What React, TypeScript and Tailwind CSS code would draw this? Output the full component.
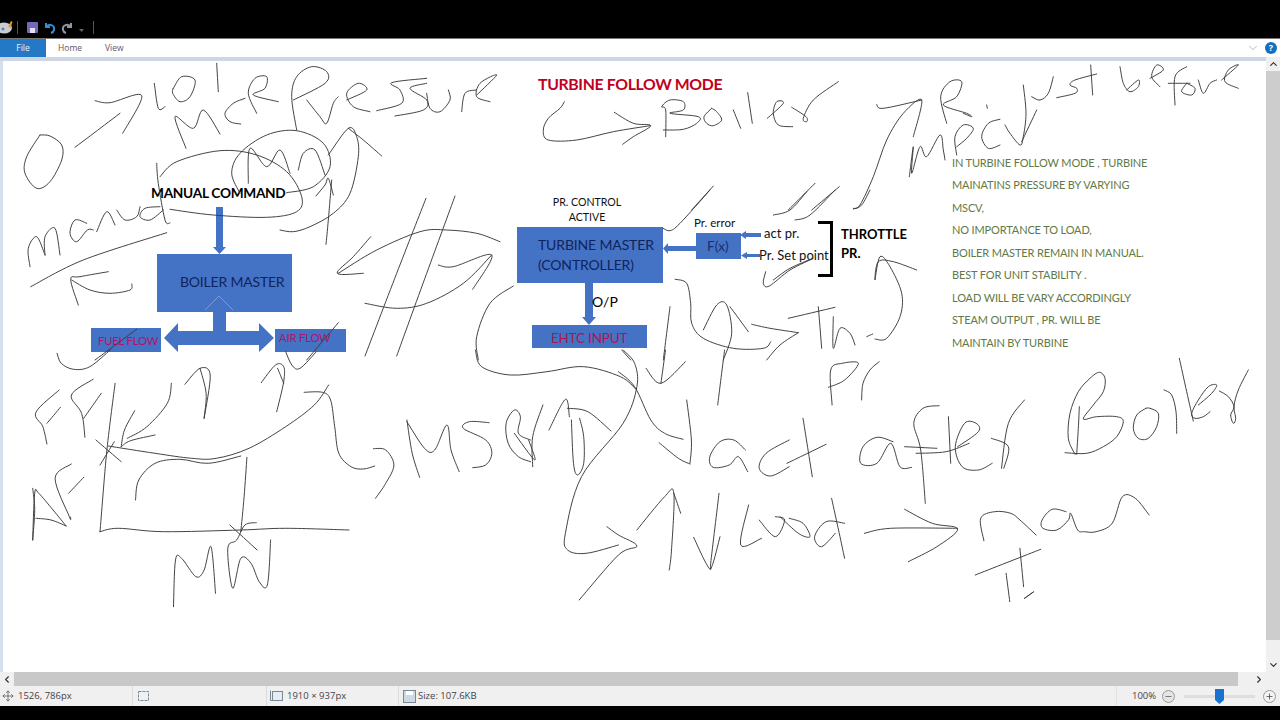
import { Minus, Plus, Move, ChevronDown, ChevronUp, ChevronLeft, ChevronRight } from 'lucide-react';

// Pen strokes traced from the picture, flat x,y lists, in crop coordinates (origin + x/y scale)
const inkGroups: { ox: number; oy: number; sx: number; sy: number; strokes: number[][] }[] = [
  {
    ox: 0,
    oy: 60,
    sx: 3,
    sy: 3,
    strokes: [
      [120, 225, 80, 290, 75, 340, 110, 385, 150, 365, 185, 300, 185, 255, 150, 228, 120, 225],
      [225, 262, 360, 160],
      [285, 122, 330, 128, 425, 107, 368, 220],
      [463, 70, 475, 145, 495, 140],
      [520, 85, 545, 50, 585, 60, 570, 110, 540, 125, 518, 100, 520, 85],
      [650, 10, 655, 95],
      [558, 265, 525, 170, 580, 205, 610, 150, 660, 222],
      [722, 192, 690, 185, 675, 160, 700, 130, 735, 115],
      [770, 160, 745, 100, 765, 55, 800, 50, 795, 85, 760, 105, 835, 125],
      [890, 210, 875, 110, 890, 50, 935, 20, 980, 35, 975, 70, 880, 120],
      [920, 120, 960, 170, 980, 190, 1000, 130, 1015, 110],
      [1040, 120, 1100, 90, 1075, 70, 1040, 100, 1060, 140, 1110, 155],
      [1280, 55, 1175, 68, 1200, 90, 1205, 130, 1130, 152],
      [1280, 70, 1230, 85, 1280, 120, 1270, 150, 1185, 168],
      [1280, 100, 1290, 145, 1320, 155, 1350, 120, 1345, 90],
      [1385, 155, 1395, 100, 1430, 90],
      [1430, 105, 1490, 45, 1440, 70, 1430, 110, 1470, 125],
      [480, 350, 530, 305, 660, 272, 770, 285, 860, 335, 905, 410, 890, 455, 800, 472, 640, 465, 510, 448],
      [860, 398, 940, 380, 990, 320, 970, 250, 890, 212, 800, 225, 720, 280, 695, 340, 720, 400],
      [745, 370, 750, 265, 800, 320, 840, 270, 870, 340],
      [895, 330, 910, 280, 945, 270, 975, 345],
      [985, 285, 1045, 205, 1070, 230, 1075, 290, 1050, 400, 1000, 460, 930, 500, 880, 515, 840, 510],
      [1045, 205, 1090, 240, 1145, 288],
      [948, 408, 975, 375, 985, 355, 1000, 405],
      [995, 360, 985, 480, 978, 553],
      [90, 620, 85, 565, 110, 530, 135, 585],
      [135, 585, 135, 530, 165, 505, 180, 585],
      [260, 490, 225, 480, 210, 520, 230, 545, 262, 510, 280, 510],
      [290, 515, 320, 455, 345, 495],
      [350, 450, 375, 480, 410, 470, 420, 440],
      [480, 440, 435, 445, 420, 470, 450, 480, 490, 450],
      [470, 310, 475, 370, 495, 480, 510, 488],
      [92, 680, 250, 600, 500, 518],
      [235, 735, 212, 658, 240, 650, 325, 635],
      [215, 660, 270, 690, 330, 700, 390, 690, 395, 672],
      [1112, 530, 1060, 590, 1012, 640, 1090, 640],
      [1015, 640, 1130, 570, 1260, 515, 1340, 510, 1430, 520, 1500, 545],
      [1278, 415, 1190, 640, 1095, 888],
      [1365, 408, 1280, 640, 1190, 888],
      [1095, 730, 1190, 745, 1280, 730, 1390, 670, 1475, 585],
      [1315, 615, 1360, 620, 1475, 585, 1418, 688],
      [1540, 678, 1470, 730, 1430, 830, 1435, 900],
      [285, 900, 410, 808],
      [920, 900, 1015, 788],
    ],
  },
  {
    ox: 0,
    oy: 350,
    sx: 2.45,
    sy: 3,
    strokes: [
      [1165, 0, 1180, 50, 1250, 75, 1340, 65, 1430, 50, 1520, 80, 1560, 120],
      [140, 10, 150, 40, 180, 58, 220, 50, 270, 0],
      [700, 5, 715, 45, 735, 55, 775, 5],
      [145, 120, 88, 187, 105, 230, 115, 282],
      [115, 220, 148, 172],
      [228, 88, 175, 135, 200, 190, 208, 262],
      [205, 205, 248, 130],
      [282, 100, 262, 300, 245, 545],
      [420, 100, 410, 160, 360, 230, 312, 265],
      [330, 182, 305, 240, 297, 290],
      [380, 255, 320, 272, 297, 290],
      [235, 270, 297, 335],
      [280, 275, 245, 345],
      [265, 288, 380, 310, 470, 325, 530, 325, 610, 295, 700, 230, 770, 165, 805, 105],
      [745, 127, 790, 127, 810, 150, 820, 230, 830, 310, 860, 350, 890, 357, 918, 348],
      [332, 450, 340, 390, 380, 340, 440, 328, 510, 340, 590, 318],
      [605, 322, 598, 440, 590, 545],
      [245, 545, 290, 535, 400, 545, 590, 540, 700, 535, 855, 540],
      [563, 525, 630, 600],
      [628, 518, 600, 525, 580, 570, 558, 595, 570, 715, 590, 625, 615, 640, 635, 695, 655, 705, 663, 570],
      [425, 770, 430, 630, 445, 625, 480, 680, 500, 660, 517, 590, 528, 730],
      [80, 570, 85, 430, 95, 430, 130, 480, 162, 528],
      [88, 505, 125, 510, 162, 528],
      [80, 415, 85, 480, 80, 570],
      [175, 342, 135, 385, 170, 500, 172, 500],
      [168, 430, 205, 382],
      [453, 103, 490, 55, 515, 75, 500, 205],
      [490, 55, 505, 130, 500, 205],
      [640, 98, 675, 45, 695, 50, 695, 95, 678, 185],
      [680, 55, 695, 100],
      [997, 210, 1010, 310, 1028, 382],
      [997, 215, 1040, 295, 1065, 300, 1095, 225, 1105, 300, 1125, 365],
      [1198, 218, 1150, 215, 1135, 235, 1190, 270, 1205, 310, 1190, 345, 1158, 353],
      [915, 296, 945, 300, 965, 345, 945, 400, 920, 445],
      [1300, 335, 1270, 320, 1245, 280, 1240, 220, 1260, 180, 1275, 200, 1270, 250, 1300, 270],
      [1330, 165, 1305, 260, 1305, 350],
      [1260, 250, 1310, 330, 1295, 270],
      [1345, 240, 1385, 148, 1395, 200],
      [1390, 175, 1440, 185, 1497, 243],
      [1400, 210, 1405, 340, 1415, 375, 1430, 340, 1430, 260, 1420, 205],
    ],
  },
  {
    ox: 540,
    oy: 350,
    sx: 2.167,
    sy: 3,
    strokes: [
      [170, 65, 205, 110, 240, 210, 270, 250, 310, 268],
      [180, 0, 205, 40, 210, 110, 180, 220, 90, 380, 55, 550, 60, 600, 100, 610, 170, 585],
      [145, 530, 170, 555, 210, 588, 170, 615, 85, 750],
      [318, 150, 328, 270, 325, 340],
      [258, 278, 300, 325, 325, 342],
      [230, 55, 262, 100, 315, 35],
      [272, 0, 262, 100],
      [400, 0, 385, 165],
      [633, 165, 630, 60, 655, 40, 690, 40, 660, 90, 625, 112],
      [697, 150, 700, 100, 715, 60, 735, 35],
      [445, 300, 420, 270, 390, 275, 368, 320, 375, 352, 410, 345, 430, 320, 450, 365],
      [540, 270, 490, 310, 475, 355, 500, 378, 540, 350],
      [570, 205, 590, 380],
      [535, 340, 620, 283],
      [765, 275, 730, 262, 700, 290, 695, 340, 730, 340, 760, 280, 780, 350, 805, 352],
      [865, 167, 830, 175, 810, 220, 825, 300, 835, 460],
      [790, 290, 860, 295],
      [815, 310, 880, 305, 930, 280],
      [885, 200, 890, 340],
      [905, 290, 950, 245, 945, 220, 920, 220, 900, 290, 915, 350, 950, 360, 980, 340],
      [978, 265, 1015, 290, 1005, 355],
      [1050, 150, 1015, 220, 1000, 355],
      [210, 540, 270, 440, 290, 430, 285, 600, 280, 660],
      [290, 430, 305, 490],
      [388, 430, 370, 640, 372, 650],
      [333, 562, 360, 640, 372, 650, 390, 560],
      [452, 465, 435, 585, 480, 565],
      [475, 510, 510, 560, 530, 510, 510, 500],
      [520, 500, 560, 550, 585, 560, 570, 520, 540, 505],
      [660, 520, 620, 515, 595, 560, 610, 590, 640, 550],
      [632, 445, 650, 560, 660, 625],
      [703, 550, 760, 535, 905, 535],
      [790, 478, 850, 520, 905, 537, 860, 590, 798, 635],
      [962, 572, 955, 505, 985, 485, 1020, 490, 1040, 510, 1075, 555],
      [1140, 485, 1110, 478, 1088, 510, 1090, 535, 1120, 540, 1145, 510, 1150, 490, 1165, 540, 1180, 545, 1205, 545, 1240, 520, 1262, 440, 1290, 445, 1320, 495],
      [943, 675, 1085, 598],
      [1040, 595, 1048, 710],
      [1010, 670, 1018, 755],
      [1050, 745, 1070, 725, 1060, 735, 1050, 745],
    ],
  },
  {
    // Boiler, bottom right
    ox: 1060,
    oy: 355,
    sx: 3,
    sy: 3,
    strokes: [
      [15, 293, 80, 295, 130, 275, 170, 245, 190, 200, 170, 185, 110, 185, 70, 192, 100, 150, 130, 110, 135, 70, 118, 52, 90, 70, 55, 110, 30, 175, 25, 250, 45, 298],
      [58, 155, 55, 220, 50, 298],
      [258, 160, 230, 180, 220, 220, 235, 250, 265, 250, 290, 215, 295, 175, 270, 160, 258, 160],
      [312, 105, 335, 120, 348, 170, 350, 235],
      [358, 10, 380, 110, 400, 198],
      [415, 150, 455, 115, 470, 90, 445, 95, 415, 135, 395, 175, 405, 190, 430, 185, 450, 170],
      [478, 108, 505, 125, 522, 155, 512, 180, 520, 205, 527, 190, 522, 155, 535, 105, 565, 45],
    ],
  },
  {
    ox: 520,
    oy: 60,
    sx: 3,
    sy: 3,
    strokes: [
      [133, 125, 120, 145, 85, 175, 70, 210, 85, 240, 170, 240, 280, 215, 390, 197],
      [283, 157, 340, 190, 392, 197, 340, 230, 308, 253],
      [437, 230, 437, 150, 425, 140, 450, 120, 490, 125, 490, 150, 450, 160, 535, 170, 530, 190, 490, 208, 430, 210],
      [575, 145, 552, 170, 560, 190, 580, 197, 605, 180, 590, 155, 575, 145],
      [640, 150, 662, 205],
      [683, 98, 697, 190],
      [742, 175, 790, 130, 770, 125, 760, 160, 775, 195, 818, 200],
      [815, 142, 858, 170, 860, 185, 850, 175, 880, 120, 955, 65],
      [1000, 445, 1020, 435, 1060, 350, 1100, 240, 1150, 160, 1205, 120, 1180, 230],
      [1070, 133, 1090, 145, 1205, 120],
      [580, 378, 515, 450],
      [885, 370, 805, 450],
      [958, 380, 875, 450],
    ],
  },
  {
    ox: 500,
    oy: 190,
    sx: 3,
    sy: 3,
    strokes: [
      [630, 0, 540, 100, 510, 122, 490, 115],
      [920, 5, 870, 60, 820, 75],
      [1005, 0, 930, 75, 885, 90],
      [1110, 0, 1085, 45, 1060, 57],
      [525, 268, 560, 280, 572, 340, 575, 400, 610, 445, 700, 475, 790, 475, 812, 455],
      [610, 420, 650, 345, 680, 345, 695, 430, 670, 510],
      [690, 350, 745, 425],
      [755, 403, 810, 415, 895, 428],
      [895, 428, 840, 465, 800, 510],
      [510, 350, 490, 510],
      [865, 385, 1005, 352],
      [955, 350, 965, 475],
      [1000, 380, 1000, 475, 1020, 415, 1050, 430, 1065, 465],
      [1100, 440, 1118, 432],
      [1125, 447, 1160, 445, 1200, 380, 1205, 310, 1170, 230, 1140, 200, 1125, 270, 1135, 215, 1180, 215, 1250, 240],
      [797, 245, 790, 280, 808, 288, 870, 240, 940, 205, 870, 235, 820, 270],
      [365, 480, 392, 510],
    ],
  },
  {
    ox: 900,
    oy: 60,
    sx: 3,
    sy: 3,
    strokes: [
      [140, 190, 122, 110, 150, 65, 185, 65, 170, 110, 130, 135, 200, 160, 215, 170, 190, 160],
      [260, 135, 262, 145],
      [370, 75, 378, 160, 370, 230, 360, 255, 330, 220, 315, 195],
      [410, 150, 365, 245],
      [395, 110, 420, 120, 445, 100, 460, 50],
      [590, 42, 525, 60, 510, 75, 530, 85, 525, 100, 470, 113],
      [572, 15, 578, 105],
      [660, 20, 670, 70, 690, 95, 715, 80, 715, 60, 680, 90],
      [750, 55, 790, 30, 770, 15, 755, 50, 780, 80],
      [860, 20, 825, 50, 825, 135],
      [805, 70, 870, 70],
      [860, 70, 845, 95, 875, 105, 885, 85, 860, 70],
      [895, 60, 910, 100, 930, 70, 950, 60],
      [965, 60, 1015, 15, 985, 30, 975, 65, 1015, 85],
      [28, 350, 40, 260, 35, 340, 60, 260, 80, 290, 120, 225, 130, 270, 135, 300],
      [170, 285, 165, 230, 190, 195, 220, 205, 200, 235, 170, 260],
      [300, 178, 265, 190, 245, 230, 265, 265, 300, 255],
    ],
  },
];

// Catmull-Rom through the traced points
const strokePath = (flat: number[], ox: number, oy: number, sx: number, sy: number) => {
  const pts: [number, number][] = [];
  for (let i = 0; i < flat.length; i += 2) pts.push([ox + flat[i] / sx, oy + flat[i + 1] / sy]);
  let d = `M${pts[0][0].toFixed(1)} ${pts[0][1].toFixed(1)}`;
  for (let i = 0; i < pts.length - 1; i++) {
    const p0 = pts[i - 1] || pts[i];
    const p1 = pts[i];
    const p2 = pts[i + 1];
    const p3 = pts[i + 2] || p2;
    const c1x = p1[0] + (p2[0] - p0[0]) / 6;
    const c1y = p1[1] + (p2[1] - p0[1]) / 6;
    const c2x = p2[0] - (p3[0] - p1[0]) / 6;
    const c2y = p2[1] - (p3[1] - p1[1]) / 6;
    d += `C${c1x.toFixed(1)} ${c1y.toFixed(1)} ${c2x.toFixed(1)} ${c2y.toFixed(1)} ${p2[0].toFixed(1)} ${p2[1].toFixed(1)}`;
  }
  return d;
};

const notes = [
  'IN TURBINE FOLLOW MODE , TURBINE',
  'MAINATINS PRESSURE BY VARYING',
  'MSCV,',
  'NO IMPORTANCE TO LOAD,',
  'BOILER MASTER REMAIN IN MANUAL.',
  'BEST FOR UNIT STABILITY .',
  'LOAD WILL BE VARY ACCORDINGLY',
  'STEAM OUTPUT , PR. WILL BE',
  'MAINTAIN BY TURBINE',
];

const App = () => {
  return (
    <div className="w-[1280px] h-[720px] overflow-hidden flex flex-col bg-black [font-family:'Open_Sans',sans-serif]">
      {/* quick access bar */}
      <div className="h-[38px] flex items-end pb-[3px] bg-black shrink-0">
        <svg width="100" height="15" viewBox="0 0 100 15">
          <ellipse cx="4" cy="8" rx="8" ry="5.500" fill="#c9ccd2" />
          <circle cx="3" cy="9" r="1.500" fill="#5a7fa8" />
          <path d="M8 7l3-6 1.500 1-2 6z" fill="#e09a3c" />
          <rect x="17" y="1" width="1" height="13" fill="#555" />
          <rect x="27" y="2" width="11" height="11" rx="1" fill="#7468b8" />
          <rect x="30" y="8" width="5" height="5" fill="#e4e0f2" />
          <path d="M46 3v4h4M46 7c3-4 9-2 8 3-.3 1.500-1.500 2.500-3 3" fill="none" stroke="#2f8fd8" strokeWidth="2" />
          <path d="M71 3v4h-4M71 7c-3-4-9-2-8 3 .3 1.500 1.500 2.500 3 3" fill="none" stroke="#8d98a6" strokeWidth="2" />
          <path d="M79 9h5l-2.500 3z" fill="#666" />
          <rect x="93" y="1" width="1" height="13" fill="#555" />
        </svg>
      </div>

      {/* ribbon tabs */}
      <div className="h-[19px] flex items-center bg-white border-t border-[#777] shrink-0 text-[8.500px] text-[#5c5570]">
        <div className="w-[46px] h-full flex items-center justify-center bg-[#2379c6] text-[#e8f1fa]">File</div>
        <span className="ml-[12px] w-[47px]">Home</span>
        <span>View</span>
        <ChevronDown className="w-[14px] h-[14px] ml-auto mr-[5px] text-[#a8b0ba]" strokeWidth={1.5} />
        <div className="w-[12px] h-[12px] mr-[3px] rounded-full bg-[#1170c0] flex items-center justify-center text-[9px] font-bold text-white">?</div>
      </div>

      {/* canvas row */}
      <div className="flex-1 flex min-h-0 bg-white">
        <div className="flex-1 flex flex-col min-w-0">
          <div className="h-[4px] bg-[#cdd6e4] shrink-0" />
          <div className="flex-1 flex min-h-0">
            <div className="w-[3px] bg-[#d5dfee] shrink-0" />
            <div className="flex-1 relative overflow-hidden bg-white [font-family:Lato,sans-serif]">
              {/* diagram boxes */}
              <div className="absolute left-[154px] top-[193px] w-[135px] h-[58px] bg-[#4472c4]" />
              <div className="absolute left-[88px] top-[267px] w-[70px] h-[24px] bg-[#4472c4]" />
              <div className="absolute left-[272px] top-[268px] w-[71px] h-[23px] bg-[#4472c4]" />
              <div className="absolute left-[514px] top-[166px] w-[146px] h-[56px] bg-[#4472c4]" />
              <div className="absolute left-[529px] top-[264px] w-[115px] h-[23px] bg-[#4472c4]" />
              <div className="absolute left-[693px] top-[172px] w-[45px] h-[26px] bg-[#4472c4]" />

              {/* block arrows */}
              <svg className="absolute inset-0 w-full h-full" viewBox="3 61 1263 611">
                <path d="M216 207h7v40h3l-6.500 7-6.500-7h3z" fill="#4472c4" />
                <path d="M205 310l14-14 14 14" fill="#4472c4" stroke="#7f9bd6" strokeWidth="1" />
                <path d="M213 312h13v19h33v-8l15 15-15 14v-7h-81v7l-14-14 14-15v8h35z" fill="#4472c4" />
                <path d="M585 283h8v34h3l-7 8-7-8h3z" fill="#4472c4" />
                <path d="M696 246v5h-28v3l-5-5.500 5-5.500v3z" fill="#4472c4" />
                <path d="M761 233v4h-15v2l-6-4 6-4v2z" fill="#4472c4" />
                <path d="M760 254v3h-13v2l-6-3.500 6-3.500v2z" fill="#4472c4" />
              </svg>

              {/* diagram labels */}
              <span className="absolute left-[535px] top-[13px] leading-[20px] text-[15.800px] font-bold text-[#c00020] whitespace-nowrap tracking-[-0.35px]">TURBINE FOLLOW MODE</span>
              <span className="absolute left-[148px] top-[122px] leading-[20px] text-[13.700px] font-bold text-black whitespace-nowrap tracking-[-0.3px]">MANUAL COMMAND</span>
              <span className="absolute left-[177px] top-[211px] leading-[20px] text-[14px] text-[#10245c] whitespace-nowrap tracking-[-0.2px]">BOILER MASTER</span>
              <span className="absolute left-[95px] top-[270px] leading-[20px] text-[11.300px] text-[#b01468] whitespace-nowrap tracking-[-0.2px]">FUEL FLOW</span>
              <span className="absolute left-[276px] top-[267px] leading-[20px] text-[11.300px] text-[#b01468] whitespace-nowrap tracking-[-0.2px]">AIR FLOW</span>
              <div className="absolute left-[549px] top-[134px] w-[70px] text-[10.600px] leading-[15px] text-[#111] whitespace-nowrap flex flex-col items-center">
                <span>PR. CONTROL</span>
                <span>ACTIVE</span>
              </div>
              <div className="absolute left-[535px] top-[174px] flex flex-col text-[14px] leading-[19.5px] text-[#10245c] whitespace-nowrap tracking-[-0.15px]">
                <span>TURBINE MASTER</span>
                <span>(CONTROLLER)</span>
              </div>
              <span className="absolute left-[589px] top-[231px] leading-[20px] text-[14px] text-black">O/P</span>
              <span className="absolute left-[548px] top-[267px] leading-[20px] text-[13.500px] text-[#a8184e] whitespace-nowrap tracking-[-0.2px]">EHTC INPUT</span>
              <span className="absolute left-[691px] top-[152px] leading-[20px] text-[11.500px] text-[#111] whitespace-nowrap">Pr. error</span>
              <span className="absolute left-[704px] top-[175px] leading-[20px] text-[13.500px] text-[#1a2f6b]">F(x)</span>
              <span className="absolute left-[761px] top-[162px] leading-[20px] text-[13px] text-[#111] whitespace-nowrap">act pr.</span>
              <span className="absolute left-[756px] top-[184px] leading-[20px] text-[13px] text-[#111] whitespace-nowrap">Pr. Set point</span>
              <div className="absolute left-[815px] top-[160px] w-[15px] h-[56px] border-y-[3px] border-r-[3px] border-black" />
              <div className="absolute left-[838px] top-[164px] flex flex-col text-[13px] leading-[19px] font-bold text-black whitespace-nowrap">
                <span>THROTTLE</span>
                <span>PR.</span>
              </div>

              {/* notes */}
              <div className="absolute left-[949px] top-[91px] flex flex-col text-[11px] leading-[22.45px] text-[#5f7a45] whitespace-nowrap tracking-[-0.14px]">
                {notes.map((line) => (
                  <span key={line}>{line}</span>
                ))}
              </div>

              {/* pen annotations on top of everything */}
              <svg className="absolute inset-0 w-full h-full" viewBox="3 61 1263 611" fill="none" stroke="#3a3a3a" strokeWidth="0.95" strokeLinecap="round">
                {inkGroups.map((g) =>
                  g.strokes.map((stroke, i) => <path key={`${g.ox}-${g.oy}-${i}`} d={strokePath(stroke, g.ox, g.oy, g.sx, g.sy)} />)
                )}
              </svg>
            </div>
          </div>
        </div>

        {/* vertical scrollbar */}
        <div className="w-[14px] flex flex-col items-center bg-[#f0f0f0] shrink-0">
          <ChevronUp className="w-[11px] h-[14px] text-[#333]" strokeWidth={2.5} />
          <div className="w-full h-[569px] bg-[#cdcdcd]" />
          <div className="flex-1" />
          <ChevronDown className="w-[11px] h-[14px] text-[#333]" strokeWidth={2.5} />
        </div>
      </div>

      {/* horizontal scrollbar */}
      <div className="h-[14px] flex items-center bg-[#f0f0f0] shrink-0">
        <ChevronLeft className="w-[14px] h-[11px] text-[#333]" strokeWidth={2.5} />
        <div className="w-[1224px] h-full bg-[#c8c8c8]" />
        <div className="flex-1" />
        <ChevronRight className="w-[14px] h-[11px] mr-[14px] text-[#333]" strokeWidth={2.5} />
      </div>

      {/* status bar */}
      <div className="h-[20px] flex items-center bg-[#f0f0f0] shrink-0 text-[9.500px] text-[#4a3f45] whitespace-nowrap">
        <div className="w-[133px] h-full flex items-center gap-[4px] pl-[2px] border-r border-[#dcdcdc]">
          <Move className="w-[12px] h-[12px] text-[#555]" strokeWidth={1.5} />
          <span>1526, 786px</span>
        </div>
        <div className="w-[134px] h-full flex items-center pl-[4px] border-r border-[#dcdcdc]">
          <svg width="13" height="13" viewBox="0 0 13 13" fill="none" stroke="#7a8794">
            <rect x="1.500" y="1.500" width="10" height="9" strokeDasharray="3 1" />
          </svg>
        </div>
        <div className="w-[132px] h-full flex items-center gap-[4px] pl-[3px] border-r border-[#dcdcdc]">
          <svg width="13" height="13" viewBox="0 0 13 13" fill="none" stroke="#7a8794">
            <path d="M.5 .5v10h10" />
            <rect x="2.500" y="1.500" width="10" height="9" fill="#e4ecf5" />
          </svg>
          <span>1910 × 937px</span>
        </div>
        <div className="flex items-center gap-[2px] pl-[4px]">
          <svg width="13" height="13" viewBox="0 0 13 13">
            <rect x=".5" y=".5" width="12" height="12" fill="#cfd9e6" stroke="#7a8794" />
            <rect x="3" y="1" width="7" height="4" fill="#fff" />
          </svg>
          <span>Size: 107.6KB</span>
        </div>
        <div className="ml-auto h-full flex items-center pl-[15px] border-l border-[#e2e2e2]">
          <span className="w-[30px]">100%</span>
          <div className="w-[13px] h-[13px] rounded-full border border-[#999] bg-[#e4e4e4] flex items-center justify-center">
            <Minus className="w-[9px] h-[9px] text-[#555]" strokeWidth={2} />
          </div>
          <div className="relative w-[71px] h-[3px] ml-[9px] bg-[#dedede]">
            <svg className="absolute left-[31px] -top-[6px]" width="9" height="15" viewBox="0 0 9 15">
              <path d="M0 0h9v11l-4.500 4-4.500-4z" fill="#1873d0" />
            </svg>
          </div>
          <div className="w-[13px] h-[13px] ml-[8px] mr-[4px] rounded-full border border-[#999] bg-[#f4f4f4] flex items-center justify-center">
            <Plus className="w-[9px] h-[9px] text-[#444]" strokeWidth={2} />
          </div>
        </div>
      </div>

      <div className="h-[14px] bg-black shrink-0" />
    </div>
  );
};

export default App;
